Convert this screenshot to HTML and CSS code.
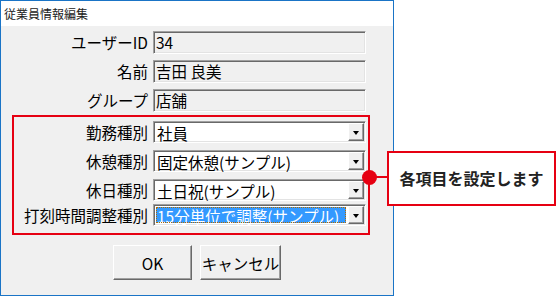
FILE: index.html
```html
<!DOCTYPE html>
<html lang="ja">
<head>
<meta charset="UTF-8">
<meta name="viewport" content="width=device-width, initial-scale=1.0">
<title>従業員情報編集</title>
<link rel="stylesheet" href="styles.css">
</head>
<body>
<div class="window">
  <div class="titlebar">従業員情報編集</div>
  <div class="dialog">
    <div class="row">
      <span class="label">ユーザーID</span>
      <div class="textbox">34</div>
    </div>
    <div class="row">
      <span class="label">名前</span>
      <div class="textbox">吉田 良美</div>
    </div>
    <div class="row">
      <span class="label">グループ</span>
      <div class="textbox">店舗</div>
    </div>

    <div class="group">
      <div class="row combo-row">
        <span class="label">勤務種別</span>
        <div class="combo"><span class="value">社員</span><span class="drop"></span></div>
      </div>
      <div class="row combo-row">
        <span class="label">休憩種別</span>
        <div class="combo"><span class="value">固定休憩(サンプル)</span><span class="drop"></span></div>
      </div>
      <div class="row combo-row">
        <span class="label">休日種別</span>
        <div class="combo"><span class="value">土日祝(サンプル)</span><span class="drop"></span></div>
      </div>
      <div class="row combo-row">
        <span class="label">打刻時間調整種別</span>
        <div class="combo"><span class="value selected">15分単位で調整(サンプル)</span><span class="drop"></span></div>
      </div>
    </div>

    <div class="buttons">
      <button class="btn ok">OK</button>
      <button class="btn cancel">キャンセル</button>
    </div>
  </div>
</div>

<!-- annotation -->
<div class="dot"></div>
<div class="leader"></div>
<div class="callout">各項目を設定します</div>
</body>
</html>
```

FILE: styles.css
```css
body { margin: 0; background: #fff; font-family: "Noto Sans CJK JP", "Noto Sans", sans-serif; color: #000; }

.window { width: 394px; height: 296px; box-sizing: border-box; border: 1px solid #1a74c6; background: #f0f0f0; }
.titlebar { height: 25px; line-height: 25px; padding-left: 3px; background: #fff; font-size: 12px; color: #222; }
.dialog { padding-top: 5px; display: flex; flex-direction: column; }

.row { display: flex; align-items: center; height: 23px; margin-bottom: 6px; }
.row:nth-child(3) { margin-bottom: 3px; }
.label { width: 147px; margin-right: 5px; text-align: right; font-size: 15.5px; line-height: 23px; white-space: nowrap; }

.textbox {
  width: 213px; height: 23px; box-sizing: border-box; padding-left: 2px;
  border: 1px solid; border-color: #a0a0a0 #fff #fff #a0a0a0;
  box-shadow: inset 1px 1px #696969, inset -1px -1px #e3e3e3;
  font-size: 15.5px; line-height: 20px; white-space: nowrap;
}

.group { margin-left: 11px; width: 358px; box-sizing: border-box; border: 2px solid #e60012; padding: 4px 1px 7px 0; }
.combo-row { height: 22px; margin-bottom: 7px; }
.combo-row:last-child { margin-bottom: 0; }
.combo-row .label { width: 134px; line-height: 22px; }
.combo {
  width: 213px; height: 22px; box-sizing: border-box; display: flex; padding: 2px;
  background: #fff;
  border: 1px solid; border-color: #a0a0a0 #fff #fff #a0a0a0;
  box-shadow: inset 1px 1px #696969, inset -1px -1px #e3e3e3;
}
.value { flex: 1; padding-left: 1px; font-size: 15.5px; line-height: 18px; white-space: nowrap; }
.value.selected { background: #3399ff; color: #fff; outline: 1px dotted #b06a00; outline-offset: -1px; margin-right: 2px; }
.drop {
  width: 16px; height: 18px; margin: -1px -1px -1px 0; box-sizing: border-box; position: relative;
  background: #f0f0f0;
  border: 1px solid; border-color: #fff #696969 #696969 #fff;
  box-shadow: inset -1px -1px #a0a0a0;
}
.drop::after {
  content: ""; position: absolute; left: 4px; top: 7px;
  border-left: 3.5px solid transparent; border-right: 3.5px solid transparent; border-top: 4px solid #000;
}

.buttons { display: flex; gap: 8px; margin-top: 10px; padding-left: 112px; }
.btn {
  height: 35px; box-sizing: border-box; padding: 0; background: #f0f0f0;
  font-family: "Noto Sans CJK JP", "Noto Sans", sans-serif; font-size: 15.5px; color: #000;
  border: 1px solid; border-color: #fff #696969 #696969 #fff;
  box-shadow: inset -1px -1px #a0a0a0;
}
.ok { width: 79px; }
.cancel { width: 81px; }

.dot { position: absolute; left: 362px; top: 170px; width: 15px; height: 15px; border-radius: 50%; background: #e60012; }
.leader { position: absolute; left: 369px; top: 176px; width: 18px; height: 2px; background: #e60012; }
.callout {
  position: absolute; left: 387px; top: 151px; width: 169px; height: 55px; box-sizing: border-box;
  border: 2px solid #e60012; background: #fff;
  font-size: 16px; font-weight: bold; color: #222; line-height: 51px; text-align: center;
}
```
